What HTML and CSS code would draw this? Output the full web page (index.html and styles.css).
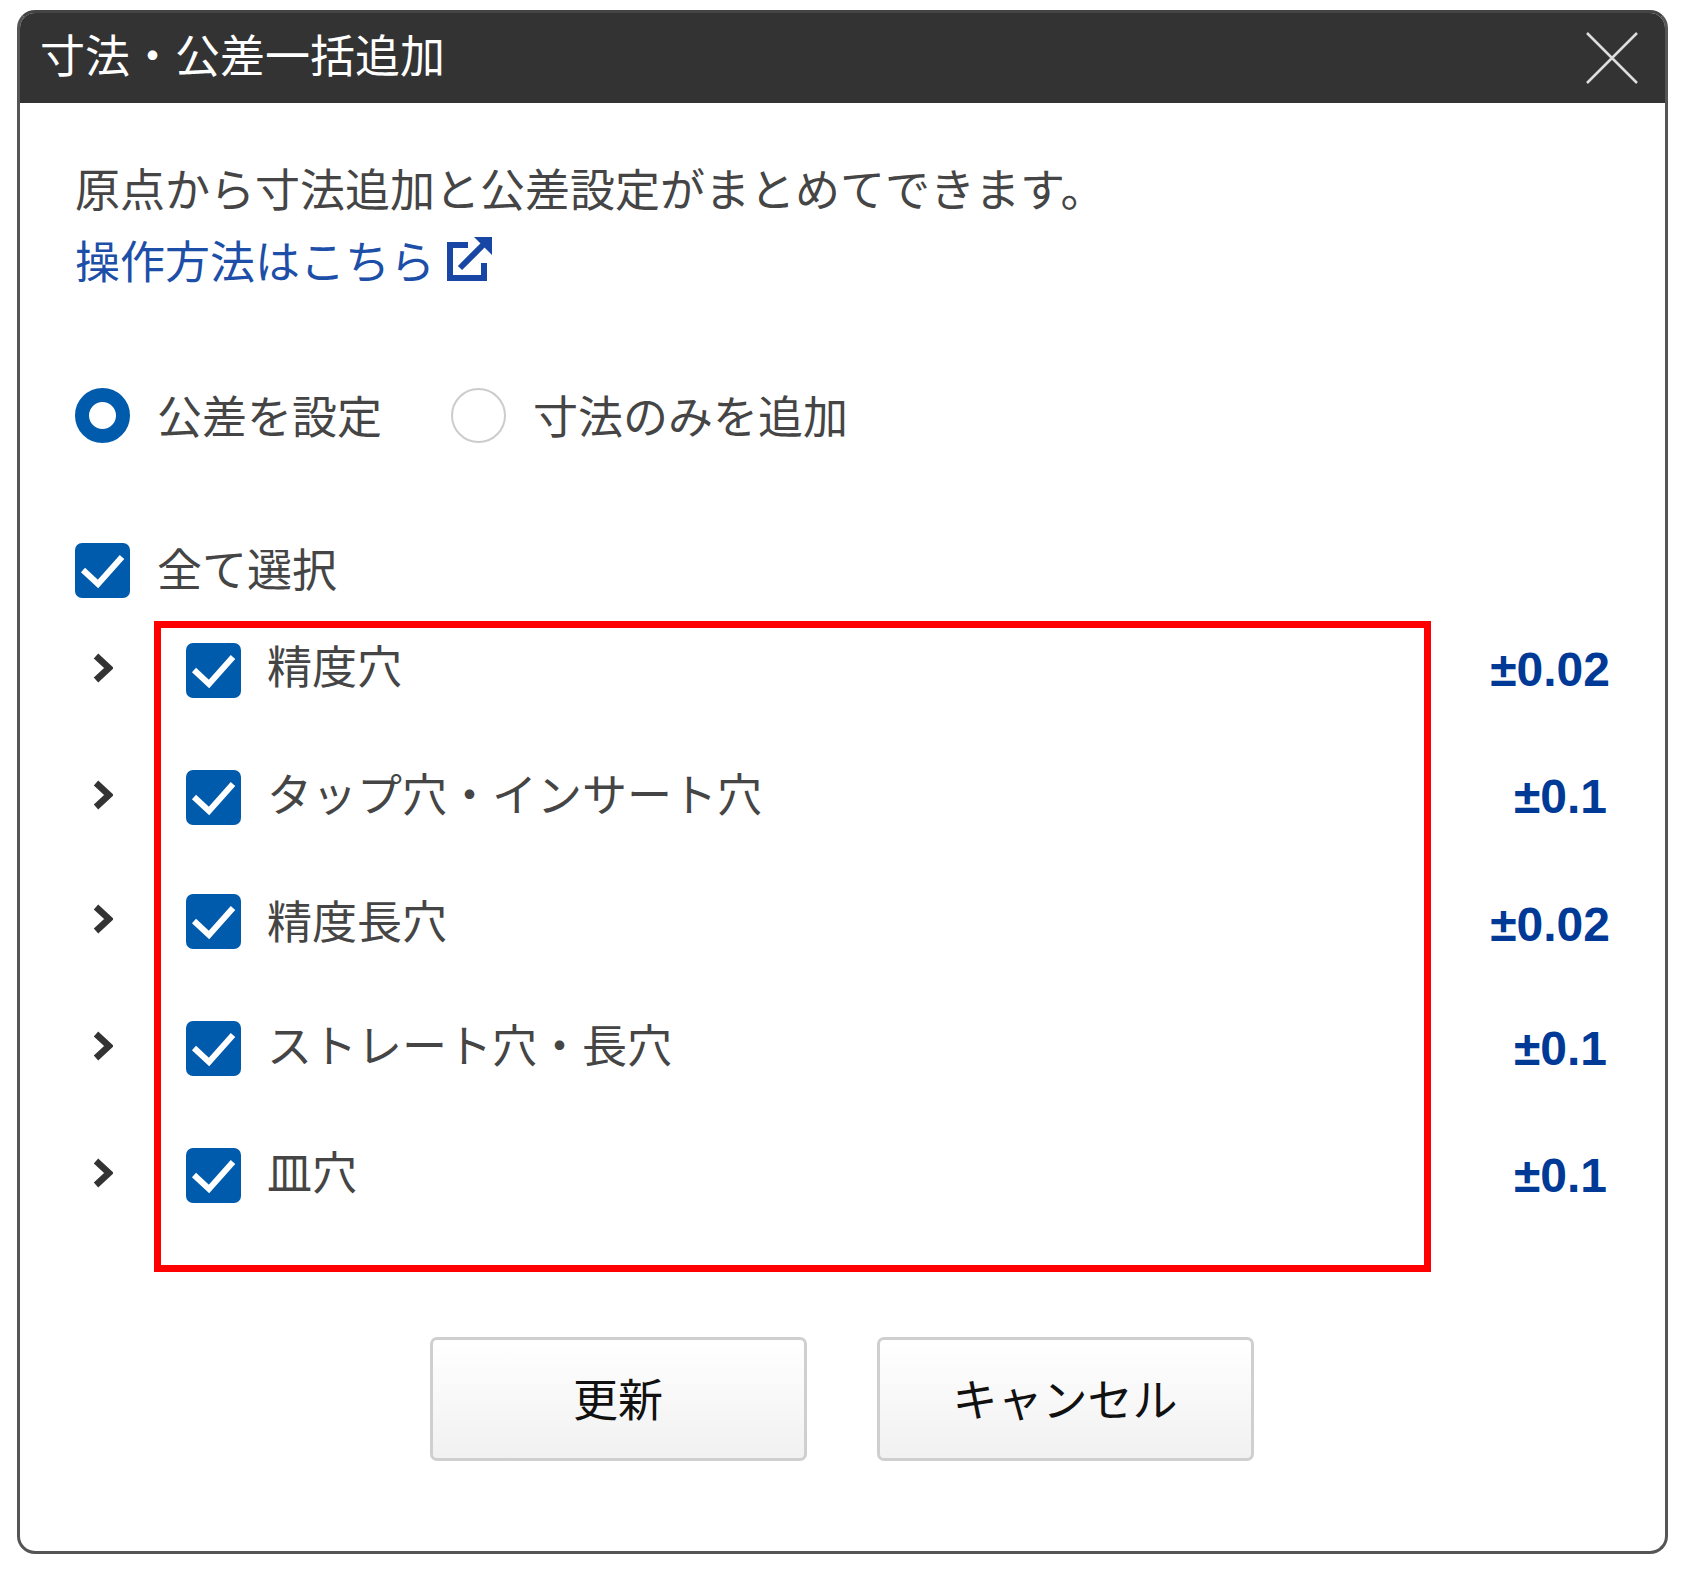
FILE: index.html
```html
<!DOCTYPE html>
<html lang="ja">
<head>
<meta charset="utf-8">
<title>寸法・公差一括追加</title>
<link rel="stylesheet" href="styles.css">
</head>
<body>
<div class="dialog">
  <header class="head">
    <h1 class="title">寸法・公差一括追加</h1>
    <svg class="close" viewBox="0 0 54 54"><path d="M2 2L52 52M52 2L2 52"/></svg>
  </header>
  <div class="body">
    <p class="intro">原点から寸法追加と公差設定がまとめてできます。</p>
    <p class="intro"><a class="link">操作方法はこちら<svg class="ext" viewBox="0 0 46 46"><path class="ext-box" d="M21 9H3V42H37V27"/><path class="ext-arrow" d="M13 32L37 8"/><path class="ext-head" d="M27 1H45V19Z"/></svg></a></p>
    <div class="radios">
      <label class="opt opt-radio"><span class="radio on"></span><span class="lbl">公差を設定</span></label>
      <label class="opt opt-radio"><span class="radio"></span><span class="lbl">寸法のみを追加</span></label>
    </div>
    <label class="opt all"><svg class="cb" viewBox="0 0 55 55"><rect width="55" height="55" rx="7"/><path d="M8 27L23 41L47 14"/></svg><span class="lbl">全て選択</span></label>
    <div class="tree">
      <div class="chevs">
        <svg class="chev" viewBox="0 0 21 30"><path d="M4 3L17 15L4 27"/></svg>
        <svg class="chev" viewBox="0 0 21 30"><path d="M4 3L17 15L4 27"/></svg>
        <svg class="chev" viewBox="0 0 21 30"><path d="M4 3L17 15L4 27"/></svg>
        <svg class="chev" viewBox="0 0 21 30"><path d="M4 3L17 15L4 27"/></svg>
        <svg class="chev" viewBox="0 0 21 30"><path d="M4 3L17 15L4 27"/></svg>
      </div>
      <div class="list">
        <label class="opt item item-first"><svg class="cb" viewBox="0 0 55 55"><rect width="55" height="55" rx="7"/><path d="M8 27L23 41L47 14"/></svg><span class="lbl">精度穴</span></label>
        <label class="opt item"><svg class="cb" viewBox="0 0 55 55"><rect width="55" height="55" rx="7"/><path d="M8 27L23 41L47 14"/></svg><span class="lbl">タップ穴・インサート穴</span></label>
        <label class="opt item item-low"><svg class="cb" viewBox="0 0 55 55"><rect width="55" height="55" rx="7"/><path d="M8 27L23 41L47 14"/></svg><span class="lbl">精度長穴</span></label>
        <label class="opt item"><svg class="cb" viewBox="0 0 55 55"><rect width="55" height="55" rx="7"/><path d="M8 27L23 41L47 14"/></svg><span class="lbl">ストレート穴・長穴</span></label>
        <label class="opt item"><svg class="cb" viewBox="0 0 55 55"><rect width="55" height="55" rx="7"/><path d="M8 27L23 41L47 14"/></svg><span class="lbl">皿穴</span></label>
      </div>
      <div class="vals">
        <span class="val">±0.02</span>
        <span class="val val-short">±0.1</span>
        <span class="val">±0.02</span>
        <span class="val val-short">±0.1</span>
        <span class="val val-short">±0.1</span>
      </div>
    </div>
    <div class="actions">
      <button class="btn"><span class="btn-text">更新</span></button>
      <button class="btn"><span class="btn-text">キャンセル</span></button>
    </div>
  </div>
</div>
</body>
</html>
```
FILE: styles.css
```css
html, body { margin: 0; padding: 0; background: #fff; }
body {
  font-family: "Noto Sans CJK JP", "Liberation Sans", sans-serif;
  font-size: 45px;
  color: #454545;
}
.dialog {
  box-sizing: border-box;
  width: 1651px;
  height: 1544px;
  margin: 10px 0 0 17px;
  border: 3px solid #555;
  border-top-color: #444;
  border-radius: 18px;
  overflow: hidden;
  background: #fff;
}
.head {
  height: 90px;
  background: #333;
  display: flex;
  align-items: center;
  justify-content: space-between;
  padding: 0 26px 0 20px;
}
.title {
  margin: 0 0 10px;
  font-size: 45px;
  font-weight: 400;
  line-height: 1;
  color: #fff;
}
.close { width: 54px; height: 54px; }
.close path { stroke: #ddd; stroke-width: 2.5; fill: none; }
.body { padding: 49px 57px 0 55px; }
.intro { margin: 0; line-height: 72px; }
.link { color: #1d4fa8; }
.ext { width: 46px; height: 46px; margin-left: 12px; vertical-align: -3px; }
.ext-box, .ext-arrow { fill: none; stroke: #1746a5; stroke-width: 6; }
.ext-head { fill: #1746a5; }
.radios { display: flex; gap: 69px; margin-top: 92px; }
.opt { display: flex; align-items: center; gap: 27px; height: 55px; line-height: 55px; }
.lbl { margin-bottom: 6px; }
.opt-radio .lbl { margin-bottom: 2px; }
.item { gap: 26px; }
.item .lbl { margin-bottom: 10px; }
.item-first .lbl { margin-bottom: 12px; }
.item-low .lbl { margin-bottom: 4px; }
.radio {
  box-sizing: border-box;
  width: 55px;
  height: 55px;
  border: 2px solid #ccc;
  border-radius: 50%;
  flex: none;
}
.radio.on { border: 14px solid #005bac; }
.all { margin-top: 100px; }
.cb { width: 55px; height: 55px; flex: none; }
.cb rect { fill: #005bac; }
.cb path { fill: none; stroke: #fff; stroke-width: 6; }
.tree { display: flex; margin-top: 23px; }
.chevs {
  display: grid;
  grid-template-rows: 127px 124px 127px 127px 55px;
  padding-top: 22px;
  width: 79px;
  flex: none;
  justify-items: start;
  align-items: start;
}
.chev { width: 21px; height: 30px; margin: 10px 0 0 17px; }
.chev path { fill: none; stroke: #333; stroke-width: 6.5; }
.list {
  box-sizing: border-box;
  width: 1277px;
  height: 651px;
  flex: none;
  border: 7px solid #f00;
  padding: 15px 0 0 25px;
  display: grid;
  grid-template-rows: 127px 124px 127px 127px 55px;
}
.vals {
  flex: 1;
  display: grid;
  grid-template-rows: 127px 128px 124px 127px 55px;
  padding-top: 22px;
  margin-right: -2px;
  text-align: right;
}
.val {
  font-family: "Liberation Sans", Arial, sans-serif;
  font-weight: 700;
  font-size: 48px;
  line-height: 55px;
  color: #003a96;
  margin-top: -1px;
}
.val-short { padding-right: 3px; }
.actions { display: flex; justify-content: center; gap: 70px; margin-top: 65px; }
.btn {
  box-sizing: border-box;
  width: 377px;
  height: 124px;
  border: 3px solid #cfcfcf;
  border-radius: 7px;
  background: linear-gradient(#fff, #f1f1f1);
  font-family: inherit;
  font-size: 45px;
  color: #111;
  padding: 0 0 4px;
}
```
